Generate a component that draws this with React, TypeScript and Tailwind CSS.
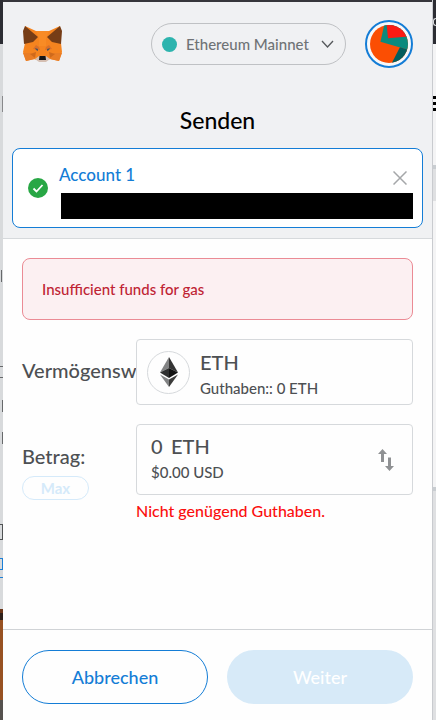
import { useState } from 'react';
import type { ReactNode } from 'react';

// MetaMask fox
function FoxLogo() {
  return (
    <svg className="h-9 w-10 shrink-0" viewBox="0 0 40 36" role="img" aria-label="MetaMask">
      <path d="M3 0 L14 5 H27 L38 0 L39 17 L40 26 L37 35 L28 33 L23 35 H18 L12 33 L4 35 L1 26 L3 17 Z" fill="#f5841f" />
      <path d="M1 27 H9 L13 33 L4 35 Z M40 27 H32 L28 33 L37 35 Z" fill="#e97d25" />
      <path d="M8 28 L14 26 L13 32 Z M33 28 L27 26 L28 32 Z" fill="#cf6a1c" />
      <path d="M11 23 L14 19 L17 21 L18 24 Z M30 23 L27 19 L24 21 L23 24 Z" fill="#d9702a" />
      <path d="M14 5 L17 12 L17 20 H24 L24 12 L27 5 Z" fill="#f88b25" />
      <path d="M3 0 L16 11 L11 16 L2 18 L1 5 Z M38 0 L25 11 L30 16 L39 18 L40 5 Z" fill="#763d16" />
      <path d="M13 22 L16 23 L16 25 L14 24 Z M28 22 L25 23 L25 25 L27 24 Z" fill="#52525a" />
      <path d="M13 33 L17 30 H24 L28 33 L24 36 H17 Z" fill="#d5bfb2" />
      <path d="M17.500 30 H23.500 L24 34 H17 Z" fill="#161616" />
    </svg>
  );
}

function AccountAvatar() {
  return (
    <svg className="size-full" viewBox="0 0 40 40" aria-hidden="true">
      <defs>
        <clipPath id="avatar">
          <circle cx="20" cy="20" r="20" />
        </clipPath>
      </defs>
      <g clipPath="url(#avatar)">
        <rect width="40" height="40" fill="#fb4e03" />
        <path d="M15 0 H40 V26 L11 17.500 Z" fill="#0b8a7d" />
        <path d="M17.500 0 H40 V12 L19 14 Z" fill="#fb1a13" />
        <path d="M31.500 23.500 L40 26 V40 H23 Z" fill="#035e5e" />
      </g>
    </svg>
  );
}

function EthIcon() {
  return (
    <svg className="h-[30px] w-5" viewBox="0 0 20 30" aria-hidden="true">
      <path d="M10 0 V11 L1 15.500 Z" fill="#828384" />
      <path d="M10 0 V11 L19 15.500 Z" fill="#343434" />
      <path d="M1 15.500 L10 11 V21 Z" fill="#2f3030" />
      <path d="M19 15.500 L10 11 V21 Z" fill="#131313" />
      <path d="M1 17.500 L10 22.500 V30 Z" fill="#828384" />
      <path d="M19 17.500 L10 22.500 V30 Z" fill="#3c3c3b" />
    </svg>
  );
}

function SwapIcon() {
  return (
    <svg className="h-[22px] w-4" viewBox="0 0 16 22" fill="#8f9193" aria-hidden="true">
      <path d="M4.500 0 L9 5 H6 V13 H3 V5 H0 Z" />
      <path d="M11.500 22 L7 17 H10 V8.500 H13 V17 H16 Z" />
    </svg>
  );
}

// A send form row: label column on the left, field on the right
function FormRow({ label, children }: { label: ReactNode; children: ReactNode }) {
  return (
    <div className="flex">
      <div className="flex w-[114px] shrink-0 flex-col items-start justify-center whitespace-nowrap pb-1 text-xl leading-6">
        {label}
      </div>
      <div className="min-w-0 flex-1">{children}</div>
    </div>
  );
}

// Slices of the page behind the popup
function LeftEdge() {
  return (
    <div aria-hidden="true" className="flex w-[3px] shrink-0 flex-col overflow-hidden bg-[#d8dadc]">
      <div className="h-11 bg-[#2c2d33]" />
      <div className="mt-[52px] ml-[2px] h-4 bg-[#88898b]" />
      <div className="mt-[158px] ml-[1px] h-3 border-l border-[#67696b]" />
      <div className="mt-[84px] h-3 border-y border-[#67696b]" />
      <div className="mt-[22px] h-3 border-r border-[#67696b]" />
      <div className="mt-[20px] h-3 border-r border-[#67696b]" />
      <div className="mt-[80px] h-4 border-y border-r border-[#505254]" />
      <div className="mt-[18px] h-5 border-b border-[#1c7fd6]">
        <div className="h-3 border-y border-r border-[#1c7fd6]" />
      </div>
      <div className="mt-[31px] h-[4px] bg-[#6b3518]" />
      <div className="h-[7px] bg-[#2f211b]" />
      <div className="h-20 bg-[#985223]" />
      <div className="flex-1 bg-[#55514e]" />
    </div>
  );
}

function RightEdge() {
  return (
    <div aria-hidden="true" className="flex w-1 shrink-0 flex-col overflow-hidden border-l border-[#c9cbcf] bg-[#f4f4f5]">
      <div className="flex h-11 flex-col justify-center bg-[#2c2d33]">
        <div className="h-2 rounded-l border-y border-l border-[#d8dadc]" />
      </div>
      <div className="mt-[52px] flex flex-col gap-[3px]">
        <div className="h-[3px] bg-black" />
        <div className="h-[3px] bg-black" />
        <div className="h-[3px] bg-black" />
      </div>
      <div className="mt-[54px] h-1 bg-[#c9cdd1]" />
      <div className="h-8 bg-[#dfe0e2]" />
      <div className="mt-[286px] h-1 bg-[#c9cdd1]" />
      <div className="flex-1 bg-[#dfe0e2]" />
    </div>
  );
}

export default function App() {
  const [recipient, setRecipient] = useState('Account 1');
  const [amount, setAmount] = useState('0');

  return (
    <div className="flex min-h-screen bg-white pr-[2px] font-['Lato','Liberation_Sans',sans-serif] font-medium text-[#4d5053]">
      <LeftEdge />

      <div className="flex min-w-0 flex-1 flex-col border-t-2 border-[#36363b] bg-[#fefefe]">
        {/* Header */}
        <header className="border-b border-[#d6d9dc] bg-[#f0f1f3] pb-[10px]">
          <div className="flex items-center px-[19px] pt-[18px]">
            <FoxLogo />
            <button
              type="button"
              className="mr-[19px] ml-auto flex h-[42px] w-[195px] items-center rounded-full border border-[#bfc1c4] pr-[11px] pl-[10px] text-[#6f7376]"
            >
              <span className="mr-[9px] size-[15px] shrink-0 rounded-full bg-[#2db4ae]" />
              <span className="whitespace-nowrap text-[15px]">Ethereum Mainnet</span>
              <svg className="ml-auto h-2 w-[13px]" viewBox="0 0 13 8" fill="none" stroke="#55585b" strokeWidth="1.300" aria-hidden="true">
                <path d="M1 1 L6.500 7 L12 1" />
              </svg>
            </button>
            <button type="button" aria-label="Account" className="size-12 rounded-full border-2 border-[#147dd6] bg-[#f7f8f9] p-[3px]">
              <AccountAvatar />
            </button>
          </div>

          <h1 className="mt-9 text-center text-[23px] leading-8 text-black">Senden</h1>

          <div className="mx-[9px] mt-3 flex h-20 items-center rounded-lg border border-[#147dd6] bg-white pr-[9px] pl-[15px]">
            <svg className="mr-[11px] size-5 shrink-0" viewBox="0 0 20 20" aria-hidden="true">
              <circle cx="10" cy="10" r="10" fill="#28a745" />
              <path d="M5.500 10.500 L8.500 13.500 L14.500 7" fill="none" stroke="#fff" strokeWidth="1.800" />
            </svg>
            <div className="relative min-w-0 flex-1 pt-1">
              <p className="h-8 text-[17px] leading-7 text-[#147dd6]">{recipient}</p>
              <button
                type="button"
                aria-label="Remove recipient"
                onClick={() => setRecipient('')}
                className="absolute top-[14px] right-[6px]"
              >
                <svg className="size-[14px]" viewBox="0 0 14 14" stroke="#a5a7a9" strokeWidth="1.500" aria-hidden="true">
                  <path d="M0.500 0.500 L13.500 13.500 M13.500 0.500 L0.500 13.500" />
                </svg>
              </button>
              {/* hidden address */}
              <div className="relative ml-[2px] h-[26px] bg-black" />
            </div>
          </div>
        </header>

        {/* Form */}
        <main className="flex flex-1 flex-col gap-[19px] px-[19px] pt-[19px] pb-6">
          <div role="alert" className="flex h-[62px] items-center rounded-lg border border-[#eb8b95] bg-[#fcf0f2] px-[19px] text-[15px] text-[#bf2434]">
            Insufficient funds for gas
          </div>

          <FormRow label="Vermögensw">
            <button type="button" className="flex h-[66px] w-full items-center rounded border border-[#d6d9dc] bg-[#fefefe] px-[10px] text-left">
              <span className="mr-[10px] flex size-[43px] shrink-0 items-center justify-center rounded-full border border-[#d6d9dc]">
                <EthIcon />
              </span>
              <span className="pt-1">
                <span className="block text-xl leading-7">ETH</span>
                <span className="block text-[15px] leading-6">Guthaben:: 0 ETH</span>
              </span>
            </button>
          </FormRow>

          <FormRow
            label={
              <>
                <label htmlFor="amount">Betrag:</label>
                <button
                  type="button"
                  disabled
                  className="mt-2 h-6 w-[67px] rounded-full border border-[#d5eafa] text-[15px] leading-5 font-bold text-[#d5eafa]"
                >
                  Max
                </button>
              </>
            }
          >
            <div className="flex h-[71px] items-center justify-between rounded border border-[#d6d9dc] pr-[18px] pl-[14px]">
              <div>
                <div className="flex gap-2 text-xl leading-6">
                  <input
                    id="amount"
                    value={amount}
                    onChange={(e) => setAmount(e.target.value)}
                    className="w-3 outline-none"
                  />
                  <span>ETH</span>
                </div>
                <p className="text-[15px] leading-7">$0.00 USD</p>
              </div>
              <button type="button" aria-label="Switch currency">
                <SwapIcon />
              </button>
            </div>
            <p className="mt-1 text-base leading-6 text-[#fb0f0f]">Nicht genügend Guthaben.</p>
          </FormRow>
        </main>

        {/* Footer */}
        <footer className="grid grid-cols-2 gap-[19px] border-t border-[#d0d3d6] px-[19px] pt-5 pb-4 text-lg">
          <button type="button" className="h-[54px] rounded-full border border-[#147dd6] text-[#147dd6]">
            Abbrechen
          </button>
          <button type="button" disabled className="h-[54px] rounded-full bg-[#d7eaf8] text-white">
            Weiter
          </button>
        </footer>
      </div>

      <RightEdge />
    </div>
  );
}
